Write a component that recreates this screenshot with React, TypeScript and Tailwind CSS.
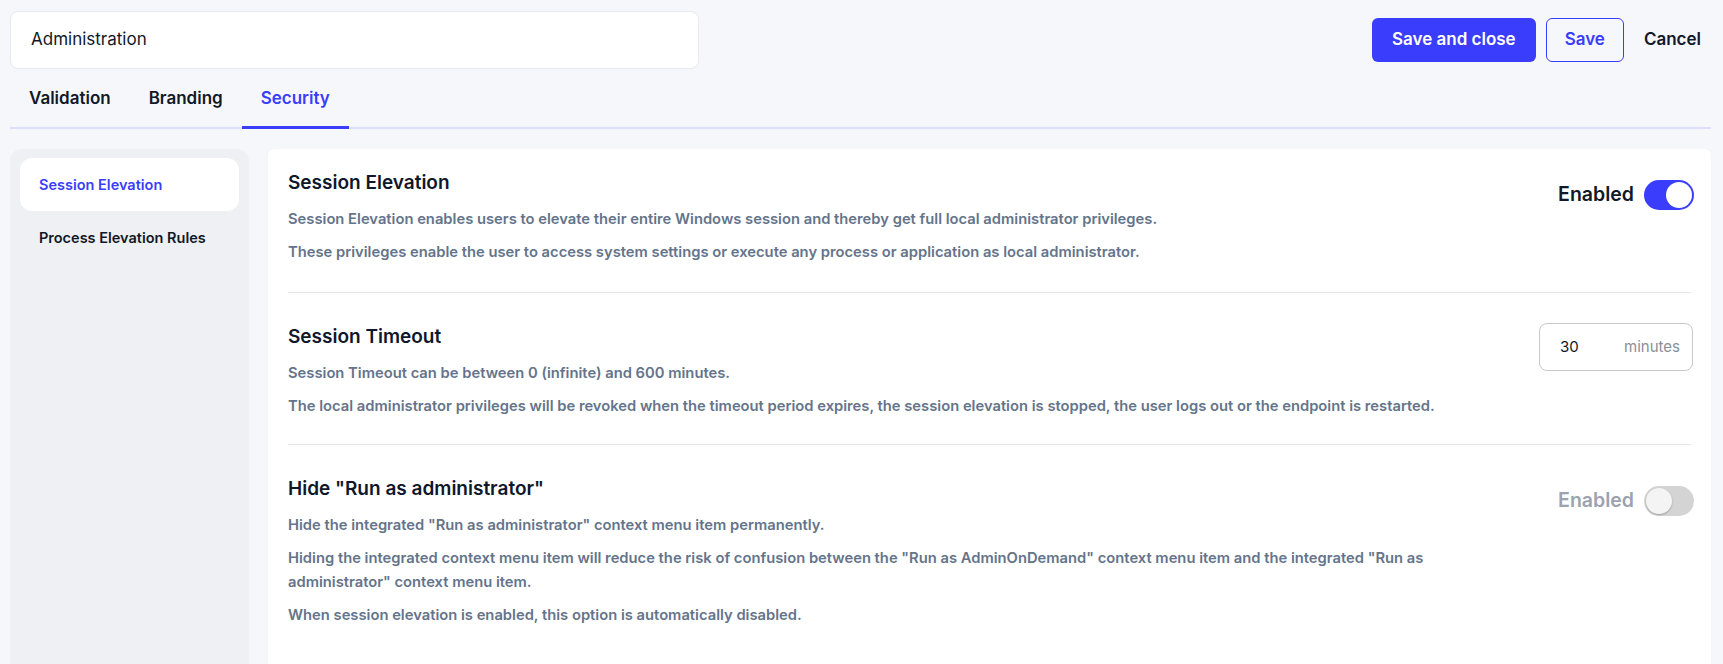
import { useState } from 'react';

const font = { fontFamily: 'Inter, "Noto Sans", sans-serif' };

function Toggle({ on, disabled }: { on: boolean; disabled?: boolean }) {
	return (
		<div className="mt-[11px] flex items-center gap-[10px]">
			<span
				className={
					disabled
						? 'text-[19.5px] font-semibold text-[#9ca3af]'
						: 'text-[19.5px] font-semibold text-[#111827]'
				}
			>
				Enabled
			</span>
			<div
				className={
					on
						? 'flex h-[30px] w-[50px] items-center justify-end rounded-full bg-[#3a3dfb] px-[2px]'
						: 'flex h-[30px] w-[50px] items-center justify-start rounded-full bg-[#d4d4d4] px-[2px]'
				}
			>
				<div
					className={
						disabled
							? 'h-[26px] w-[26px] rounded-full bg-[#f4f4f4] shadow-[0_1px_2px_rgba(0,0,0,0.25)]'
							: 'h-[26px] w-[26px] rounded-full bg-white'
					}
				/>
			</div>
		</div>
	);
}

function Section({
	title,
	first,
	last,
	right,
	children,
}: {
	title: string;
	first?: boolean;
	last?: boolean;
	right: React.ReactNode;
	children: React.ReactNode;
}) {
	return (
		<div
			className={[
				'flex justify-between gap-10',
				first ? 'pt-5 pb-[28px]' : 'pt-[30px]',
				last ? 'pb-10' : 'border-b border-[#e5e7eb]',
				!first && !last ? 'pb-[26px]' : '',
			].join(' ')}
		>
			<div className="max-w-[1220px] flex-1">
				<h3 className="text-[19px] leading-7 font-semibold text-[#0f172a]">
					{title}
				</h3>
				<div className="mt-[10px] flex flex-col gap-[9px] text-[14.75px] leading-6 font-semibold text-[#64748b]">
					{children}
				</div>
			</div>
			<div className="-mr-[3px] shrink-0">{right}</div>
		</div>
	);
}

export default function App() {
	const [tab] = useState('Security');
	const tabs = ['Validation', 'Branding', 'Security'];

	return (
		<div className="min-h-screen bg-[#f6f7fb] pl-[10px] pr-[12px] pt-[11px]" style={font}>
			{/* header */}
			<div className="flex items-center justify-between">
				<div className="flex h-[58px] w-[689px] items-center rounded-lg border border-[#e8e9ee] bg-white px-5 text-[17px] text-[#111827]">
					Administration
				</div>
				<div className="flex items-center gap-[10px]">
					<button className="h-11 rounded-md bg-[#3a3dfb] px-5 text-[17px] font-semibold text-white">
						Save and close
					</button>
					<button className="h-11 rounded-md border border-[#3a3dfb] px-[18px] text-[17px] font-semibold text-[#3a3dfb]">
						Save
					</button>
					<button className="h-11 px-[10px] text-[17px] font-semibold text-[#111827]">
						Cancel
					</button>
				</div>
			</div>

			{/* tabs */}
			<div className="mt-[17px] flex border-b-2 border-[#dcdefc]">
				{tabs.map((t) => (
					<div
						key={t}
						className={
							t === tab
								? '-mb-[2px] border-b-[3px] border-[#3a3dfb] px-[19px] pb-4 text-[17px] leading-6 font-semibold text-[#3a3dfb]'
								: '-mb-[2px] border-b-[3px] border-transparent px-[19px] pb-4 text-[17px] leading-6 font-semibold text-[#111827]'
						}
					>
						{t}
					</div>
				))}
			</div>

			{/* body */}
			<div className="mt-5 flex h-[560px] gap-[19px]">
				<div className="w-[239px] shrink-0 rounded-t-xl bg-[#eef0f4] px-[10px] pt-[9px]">
					<div className="flex h-[53px] items-center rounded-xl bg-white px-[19px] text-[14.5px] font-semibold text-[#3a3dfb]">
						Session Elevation
					</div>
					<div className="flex h-[53px] items-center px-[19px] text-[14.5px] font-semibold text-[#111827]">
						Process Elevation Rules
					</div>
				</div>

				<div className="flex-1 rounded-t-md bg-white px-5 shadow-[0_0_2px_rgba(0,0,0,0.04)]">
					<Section title="Session Elevation" first right={<Toggle on />}>
						<p>
							Session Elevation enables users to elevate their entire Windows session and thereby get full local administrator privileges.
						</p>
						<p>
							These privileges enable the user to access system settings or execute any process or application as local administrator.
						</p>
					</Section>

					<Section
						title="Session Timeout"
						right={
							<div className="mr-[1px] flex h-12 w-[154px] items-center justify-between rounded-lg border border-[#c8c8c8] pl-5 pr-3">
								<span className="text-[15px] text-[#111827]">30</span>
								<span className="text-[15px] text-[#8a8f98]">minutes</span>
							</div>
						}
					>
						<p>Session Timeout can be between 0 (infinite) and 600 minutes.</p>
						<p>
							The local administrator privileges will be revoked when the timeout period expires, the session elevation is stopped, the user logs out or the endpoint is restarted.
						</p>
					</Section>

					<Section title='Hide "Run as administrator"' last right={<Toggle on={false} disabled />}>
						<p>Hide the integrated "Run as administrator" context menu item permanently.</p>
						<p>
							Hiding the integrated context menu item will reduce the risk of confusion between the "Run as AdminOnDemand" context menu item and the integrated "Run as administrator" context menu item.
						</p>
						<p>When session elevation is enabled, this option is automatically disabled.</p>
					</Section>
				</div>
			</div>
		</div>
	);
}
